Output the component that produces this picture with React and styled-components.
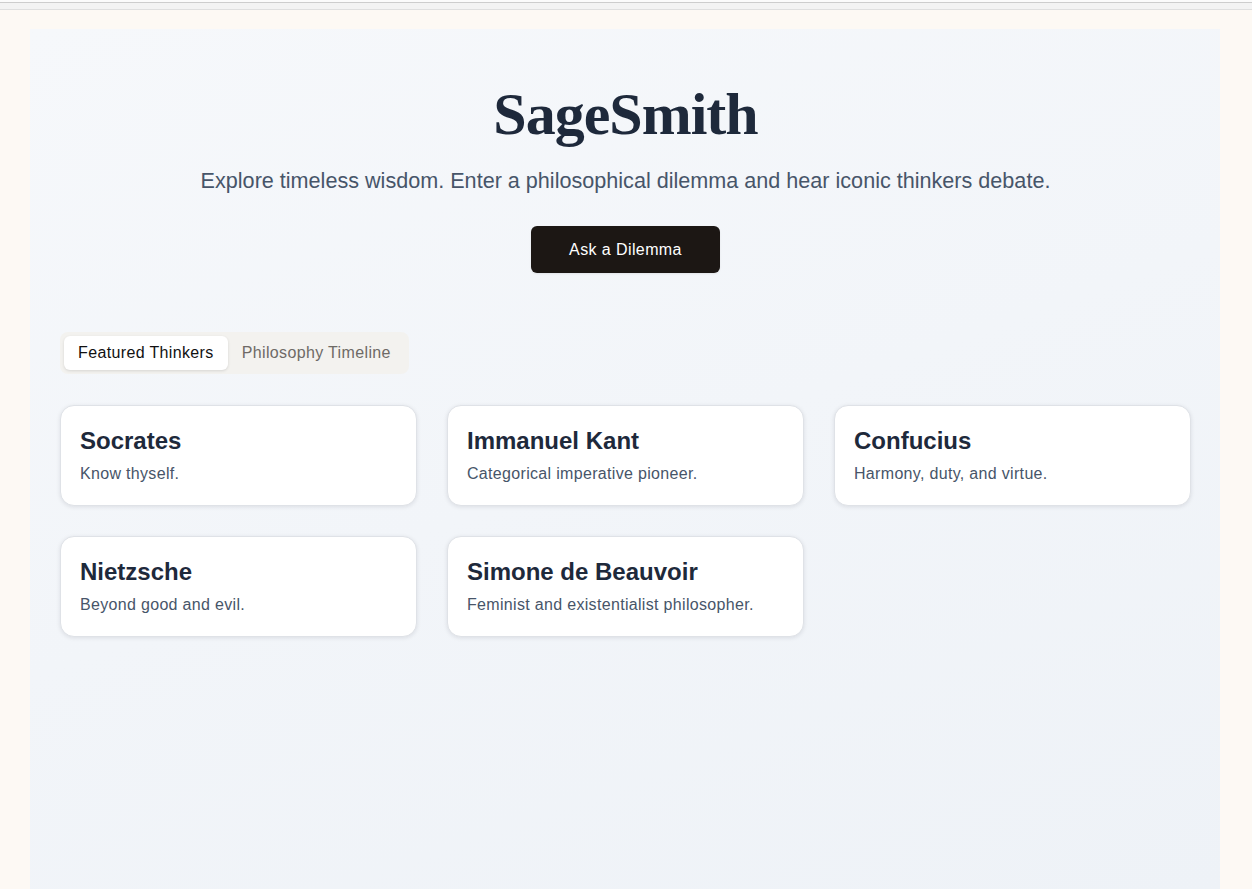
import React, { useState } from 'react'
import styled, { createGlobalStyle } from 'styled-components'

const GlobalStyle = createGlobalStyle`
    html, body {
        margin: 0;
        padding: 0;
        background: #fdf9f4;
        font-family: "Liberation Sans", Arial, sans-serif;
    }
    * {
        box-sizing: border-box;
    }
`;

const TopStrip = styled.div`
    background: #fbfbfb;
    padding-top: 2px;
`;

const StripBar = styled.div`
    height: 8px;
    background: #f3f3f3;
    border-top: 1px solid #cdcdcd;
    border-bottom: 1px solid #dfdfdf;
`;

const Page = styled.div`
    padding: 19px 32px 0 30px;
    min-height: calc(100vh - 10px);
    display: flex;
`;

const Panel = styled.main`
    flex: 1;
    background: linear-gradient(160deg, #f6f8fb 0%, #f2f5f9 50%, #eef2f7 100%);
    padding: 51px 29px 60px 30px;
`;

const Hero = styled.section`
    display: flex;
    flex-direction: column;
    align-items: center;
    text-align: center;
`;

const Title = styled.h1`
    margin: 0;
    font-family: "Liberation Serif", "Times New Roman", serif;
    font-size: 60px;
    font-weight: 700;
    letter-spacing: -1px;
    color: #1e293b;
`;

const Subtitle = styled.p`
    margin: 19px 0 0;
    font-size: 21.6px;
    color: #475569;
`;

const AskButton = styled.button`
    margin-top: 32px;
    height: 47px;
    padding: 0 38px;
    border: none;
    border-radius: 6px;
    background: #1c1714;
    color: #ffffff;
    font-family: inherit;
    font-size: 16px;
    letter-spacing: 0.4px;
    cursor: pointer;
    box-shadow: 0 1px 2px rgba(0, 0, 0, 0.08);
`;

const Tabs = styled.div`
    display: inline-flex;
    margin-top: 59px;
    padding: 4px;
    border-radius: 8px;
    background: #f3f2ef;
`;

const Tab = styled.button`
    height: 34px;
    padding: 0 14px;
    border: none;
    border-radius: 6px;
    font-family: inherit;
    font-size: 16px;
    letter-spacing: 0.36px;
    cursor: pointer;
    background: ${p => (p.$active ? '#ffffff' : 'transparent')};
    color: ${p => (p.$active ? '#111111' : '#6e6a66')};
    box-shadow: ${p => (p.$active ? '0 1px 3px rgba(0,0,0,0.12)' : 'none')};
`;

const Grid = styled.div`
    display: grid;
    grid-template-columns: repeat(3, 1fr);
    gap: 30px 30px;
    margin-top: 31px;
`;

const Card = styled.article`
    background: #ffffff;
    border: 1px solid #dfe2e7;
    border-radius: 14px;
    padding: 21px 19px 22px;
    box-shadow: 0 1px 4px rgba(15, 23, 42, 0.1);
`;

const Name = styled.h3`
    margin: 0 0 10px;
    font-size: 24px;
    font-weight: 700;
    color: #1e293b;
`;

const Blurb = styled.p`
    margin: 0;
    font-size: 16px;
    letter-spacing: 0.32px;
    color: #475569;
`;

const thinkers = [
    { name: 'Socrates', blurb: 'Know thyself.' },
    { name: 'Immanuel Kant', blurb: 'Categorical imperative pioneer.' },
    { name: 'Confucius', blurb: 'Harmony, duty, and virtue.' },
    { name: 'Nietzsche', blurb: 'Beyond good and evil.' },
    { name: 'Simone de Beauvoir', blurb: 'Feminist and existentialist philosopher.' },
];

export default function App() {
    const [tab, setTab] = useState('featured');

    return (
        <>
            <GlobalStyle />
            <TopStrip>
                <StripBar />
            </TopStrip>
            <Page>
                <Panel>
                    <Hero>
                        <Title>SageSmith</Title>
                        <Subtitle>Explore timeless wisdom. Enter a philosophical dilemma and hear iconic thinkers debate.</Subtitle>
                        <AskButton>Ask a Dilemma</AskButton>
                    </Hero>
                    <Tabs>
                        <Tab $active={tab === 'featured'} onClick={() => setTab('featured')}>Featured Thinkers</Tab>
                        <Tab $active={tab === 'timeline'} onClick={() => setTab('timeline')}>Philosophy Timeline</Tab>
                    </Tabs>
                    <Grid>
                        {thinkers.map(t => (
                            <Card key={t.name}>
                                <Name>{t.name}</Name>
                                <Blurb>{t.blurb}</Blurb>
                            </Card>
                        ))}
                    </Grid>
                </Panel>
            </Page>
        </>
    )
}
